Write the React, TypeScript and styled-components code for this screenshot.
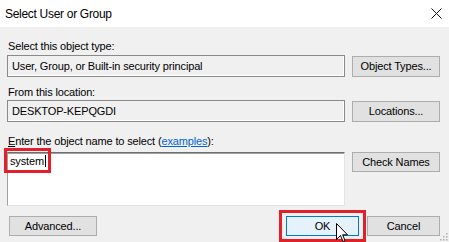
import React from "react";
import styled, { createGlobalStyle } from "styled-components";

const GlobalStyle = createGlobalStyle`
  html, body { margin: 0; padding: 0; background: #f0f0f0; }
  body { font-family: "Liberation Sans", Arial, sans-serif; }
`;

const Window = styled.div`
  position: relative;
  width: 449px;
  height: 242px;
  overflow: hidden;
  background: #f0f0f0;
  display: flex;
  flex-direction: column;
  box-sizing: border-box;
`;

const TitleBar = styled.div`
  height: 27px;
  flex: none;
  background: #ffffff;
  display: flex;
  align-items: center;
  justify-content: space-between;
  padding: 0 7px 0 5px;
  box-sizing: border-box;
`;

const Title = styled.span`
  font-family: "Liberation Sans", Arial, sans-serif;
  font-size: 12px;
  letter-spacing: -0.3px;
  color: #000;
  margin-top: 1px;
`;

const Body = styled.div`
  display: flex;
  flex-direction: column;
  padding: 13px 9px 0 7px;
  letter-spacing: -0.15px;
`;

const Label = styled.div<{ $mt?: number; $mb?: number }>`
  font-size: 11px;
  line-height: 13px;
  color: #000;
  padding-left: 1px;
  margin-top: ${(p) => p.$mt ?? 0}px;
  margin-bottom: ${(p) => p.$mb ?? 0}px;
`;

const Row = styled.div`
  display: grid;
  grid-template-columns: 338px 88px;
  column-gap: 7px;
  align-items: start;
`;

const Field = styled.div`
  height: 22px;
  box-sizing: border-box;
  border: 1px solid #8a8a8a;
  box-shadow: inset -1px -1px 0 #ffffff;
  padding-left: 4px;
  line-height: 20px;
  font-size: 11px;
  color: #000;
  background: #f0f0f0;
  white-space: nowrap;
`;

const Input = styled.div`
  height: 54px;
  box-sizing: border-box;
  background: #ffffff;
  border-top: 1px solid #6e6e6e;
  border-left: 1px solid #a0a0a0;
  border-right: 1px solid #e3e3e3;
  border-bottom: 1px solid #e3e3e3;
  box-shadow: inset 0 1px 0 #a0a0a0;
  padding: 1px 0 0 2px;
  font-size: 11px;
  line-height: 14px;
  color: #000;
`;

const Caret = styled.span`
  display: inline-block;
  width: 1px;
  height: 12px;
  background: #000;
  vertical-align: -2px;
  margin-left: 1px;
`;

const Button = styled.button<{ $w?: number; $h?: number; $mt?: number; $focus?: boolean }>`
  width: ${(p) => (p.$w ? `${p.$w}px` : "100%")};
  height: ${(p) => p.$h ?? 20}px;
  margin: ${(p) => p.$mt ?? 0}px 0 0 0;
  padding: 0;
  box-sizing: border-box;
  background: ${(p) => (p.$focus ? "#e5f1fb" : "#e1e1e1")};
  border: 1px solid ${(p) => (p.$focus ? "#0078d7" : "#adadad")};
  font-family: "Liberation Sans", Arial, sans-serif;
  font-size: 11px;
  letter-spacing: -0.15px;
  color: #000;
  line-height: 1;
`;

const ButtonRow = styled.div`
  display: flex;
  align-items: center;
  margin-top: 10px;
  padding-left: 2px;
  gap: 8px;
`;

const Spacer = styled.div`
  flex: 1;
`;

const Link = styled.span`
  color: #0066cc;
  text-decoration: underline;
`;

const AccessKey = styled.span`
  text-decoration: underline;
`;

const RedBox = styled.div<{ $x: number; $y: number; $w: number; $h: number }>`
  position: absolute;
  left: ${(p) => p.$x}px;
  top: ${(p) => p.$y}px;
  width: ${(p) => p.$w}px;
  height: ${(p) => p.$h}px;
  box-sizing: border-box;
  border: 3px solid #e3202a;
  pointer-events: none;
`;

const Cursor = styled.svg`
  position: absolute;
  left: 336px;
  top: 223px;
`;

const Grip = styled.svg`
  position: absolute;
  right: 1px;
  bottom: 1px;
`;

export default function App() {
  return (
    <>
      <GlobalStyle />
      <Window>
        <TitleBar>
          <Title>Select User or Group</Title>
          <svg width="11" height="11" viewBox="0 0 11 11">
            <path d="M0.5 0.5 L10.5 10.5 M10.5 0.5 L0.5 10.5" stroke="#111" strokeWidth="1" fill="none" />
          </svg>
        </TitleBar>
        <Body>
          <Label $mb={2}>Select this object type:</Label>
          <Row>
            <Field>User, Group, or Built-in security principal</Field>
            <Button $h={21} $mt={1}>Object Types...</Button>
          </Row>
          <Label $mt={9} $mb={1}>From this location:</Label>
          <Row>
            <Field>DESKTOP-KEPQGDI</Field>
            <Button $h={21} $mt={1}>Locations...</Button>
          </Row>
          <Label $mt={13} $mb={4}>
            <AccessKey>E</AccessKey>nter the object name to select (<Link>examples</Link>):
          </Label>
          <Row>
            <Input>
              system
              <Caret />
            </Input>
            <Button $h={20}>Check Names</Button>
          </Row>
          <ButtonRow>
            <Button $w={88}>Advanced...</Button>
            <Spacer />
            <Button $w={73} $focus>OK</Button>
            <Button $w={73}>Cancel</Button>
          </ButtonRow>
        </Body>
        <RedBox $x={4} $y={148} $w={47} $h={25} />
        <RedBox $x={279} $y={210} $w={87} $h={32} />
        <Cursor width="13" height="21" viewBox="0 0 13 21">
          <path d="M0.5 0.5 L0.5 16.5 L4.5 12.5 L7 18.5 L9 17.6 L6.6 11.8 L11.5 11.8 Z" fill="#fff" stroke="#000" strokeWidth="1" strokeLinejoin="miter" />
        </Cursor>
        <Grip width="9" height="9" viewBox="0 0 9 9">
          <rect x="7" y="1" width="1.5" height="1.5" fill="#b0b0b0" />
          <rect x="4" y="4" width="1.5" height="1.5" fill="#b0b0b0" />
          <rect x="7" y="4" width="1.5" height="1.5" fill="#b0b0b0" />
          <rect x="1" y="7" width="1.5" height="1.5" fill="#b0b0b0" />
          <rect x="4" y="7" width="1.5" height="1.5" fill="#b0b0b0" />
          <rect x="7" y="7" width="1.5" height="1.5" fill="#b0b0b0" />
        </Grip>
      </Window>
    </>
  );
}
